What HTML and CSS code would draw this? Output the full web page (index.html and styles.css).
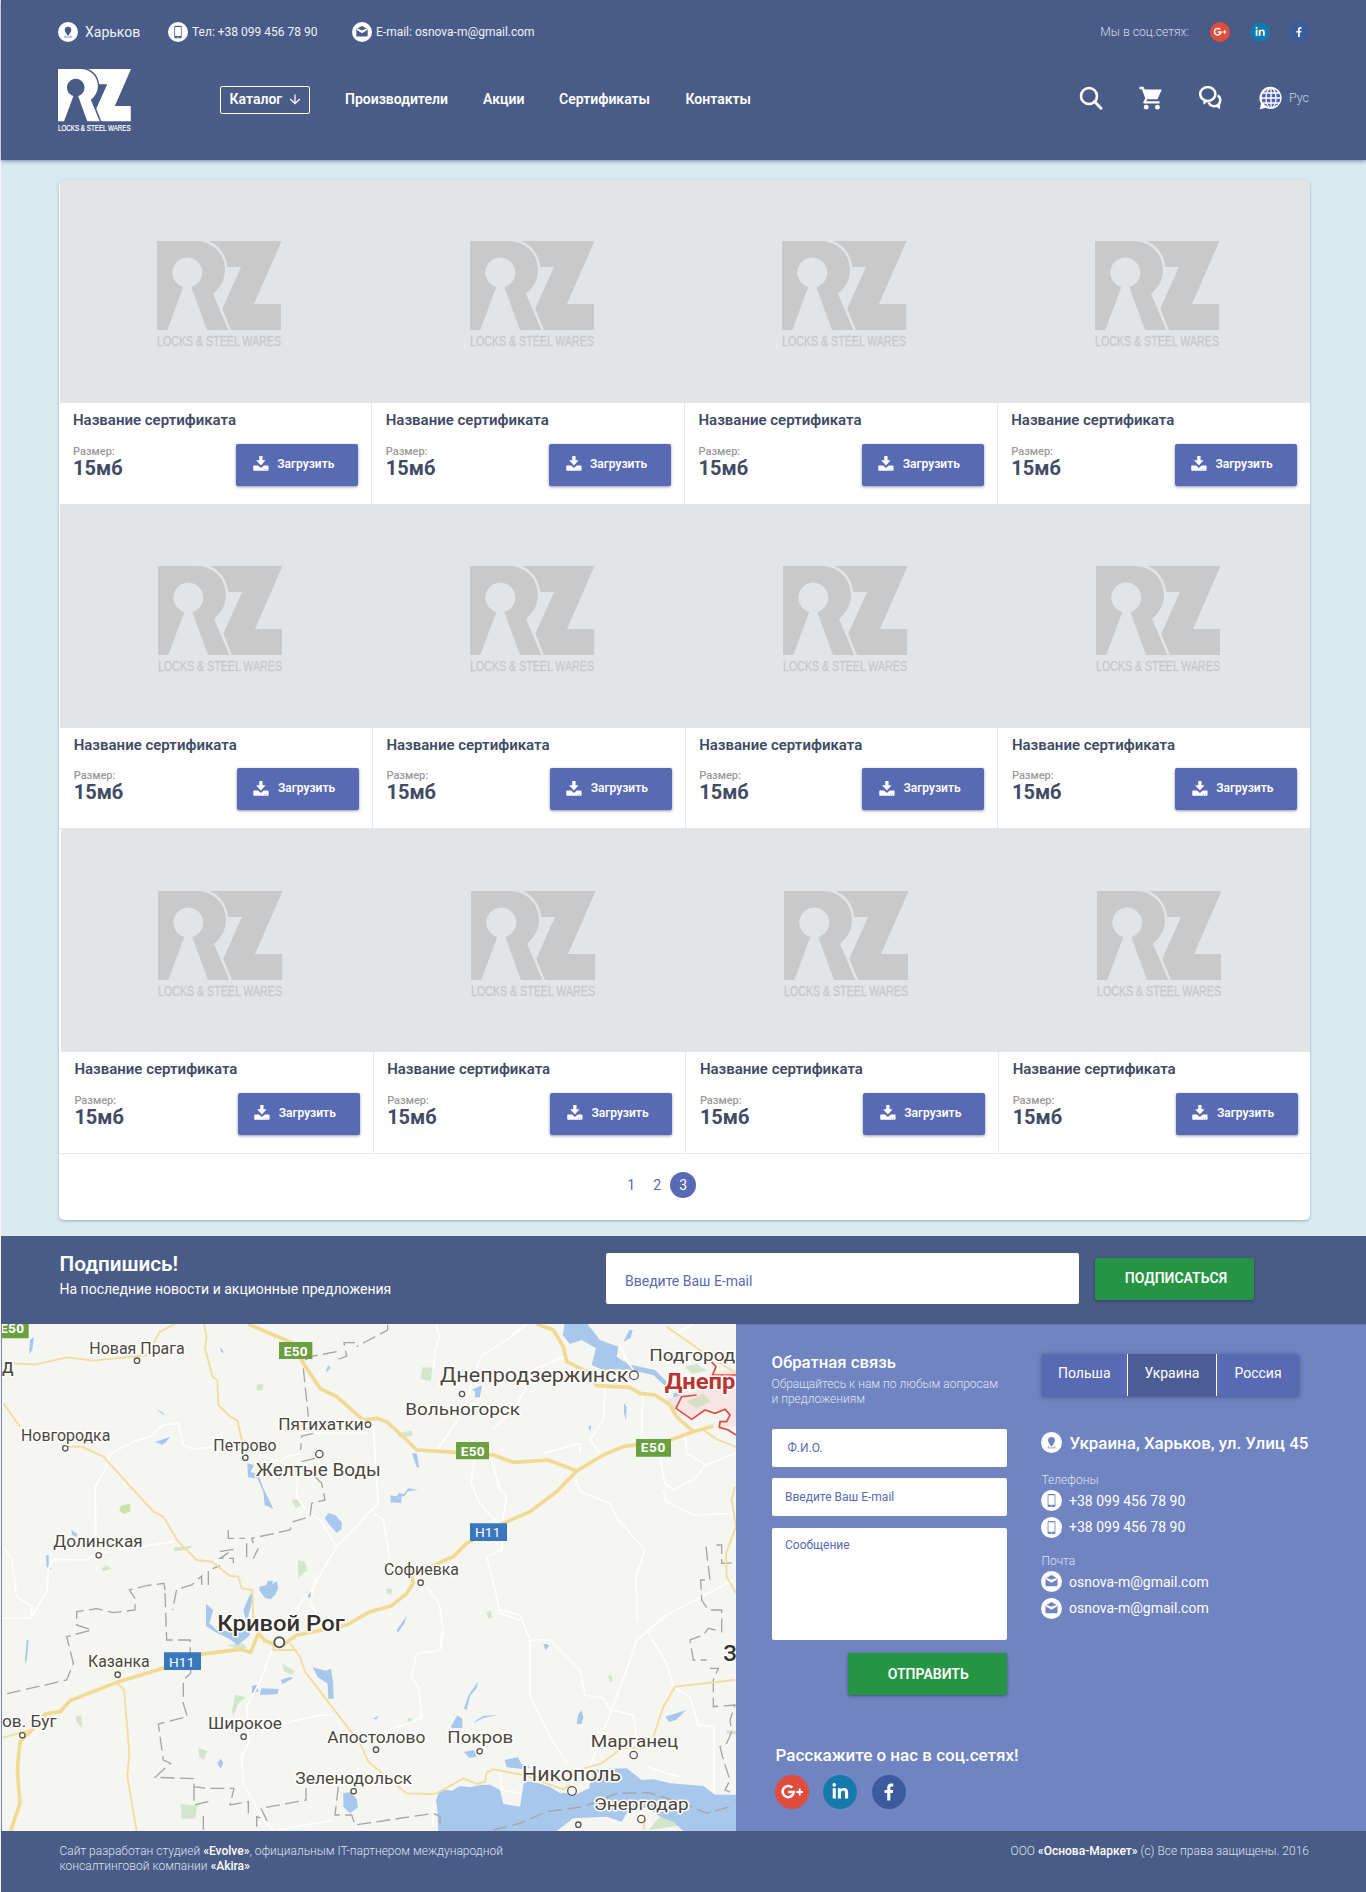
FILE: index.html
```html
<!DOCTYPE html>
<html lang="ru">
<head>
<meta charset="utf-8">
<title>RZ — Сертификаты</title>
<link rel="stylesheet" href="styles.css">
</head>
<body>
<svg class="sprite" aria-hidden="true">
  <symbol id="logo" viewBox="0 0 124.6 106.5">
    <path d="M0 0H38C56 0 68 13 68 29C68 39 63 47 56 52.7L71.3 89H50L34.3 46A15 15 0 1 0 26.3 46L10.3 89H0Z"/>
    <path d="M51.3 0H124.6L97 63H124.2V89H74L65.3 67.7L84 26H70.3C69 14 62 4 51.3 0Z"/>
    <text x="0" y="105" font-size="14.6" textLength="124" lengthAdjust="spacingAndGlyphs">LOCKS &amp; STEEL WARES</text>
  </symbol>
  <symbol id="pin" viewBox="0 0 20 20">
    <circle cx="10" cy="10" r="10" fill="#fff"/>
    <path d="M10 4.7a3.3 3.3 0 0 0-3.3 3.4c0 2.2 2 3.4 2.6 5.4h1.4c.6-2 2.6-3.2 2.6-5.4A3.3 3.3 0 0 0 10 4.700z" fill="currentColor"/>
    <path d="M7.600 13.300L6.500 15.200H13.500L12.400 13.300" fill="none" stroke="currentColor" stroke-width=".6"/>
  </symbol>
  <symbol id="phone" viewBox="0 0 20 20">
    <circle cx="10" cy="10" r="10" fill="#fff"/>
    <path fill-rule="evenodd" d="M7.300 3.700h5.400a1 1 0 0 1 1 1v10.600a1 1 0 0 1-1 1H7.300a1 1 0 0 1-1-1V4.700a1 1 0 0 1 1-1zM7.100 4.900v9.200h5.800V4.900zM9.300 14.700v.8h1.400v-.8z" fill="currentColor"/>
  </symbol>
  <symbol id="mail" viewBox="0 0 20 20">
    <circle cx="10" cy="10" r="10" fill="#fff"/>
    <path d="M10 3.900L15.700 7.200V13.500a1 1 0 0 1-1 1H5.300a1 1 0 0 1-1-1V7.200Z" fill="currentColor"/>
    <path d="M4.800 6.900H15.200V8L10 11.200L4.800 8Z" fill="#fff"/>
    <path d="M10 4.200L14 6.600L10 8.400L6 6.600Z" fill="currentColor"/>
  </symbol>
  <symbol id="gplus" viewBox="0 0 34 34">
    <circle cx="17" cy="17" r="17" fill="#df4d3c"/>
    <path d="M17.300 12.700A5.600 5.600 0 1 0 18.800 17H13.200" fill="none" stroke="#fff" stroke-width="2.500"/>
    <path d="M24.700 13.600v6.800M21.300 17h6.800" stroke="#fff" stroke-width="1.900"/>
  </symbol>
  <symbol id="linkedin" viewBox="0 0 34 34">
    <circle cx="17" cy="17" r="17" fill="#157aab"/>
    <circle cx="11.200" cy="9.900" r="1.800" fill="#fff"/>
    <path d="M9.700 13.200h3.100V23.500H9.700zM14.900 13.200h2.900v1.400c.7-1.100 1.700-1.700 3.200-1.700 3.100 0 4.100 1.700 4.100 4.700v5.900H22v-5.400c0-1.500-.3-2.700-1.900-2.700-1.500 0-2.100 1-2.100 2.600v5.500h-3.100z" fill="#fff"/>
  </symbol>
  <symbol id="facebook" viewBox="0 0 34 34">
    <circle cx="17" cy="17" r="17" fill="#3b5b9c"/>
    <path d="M15.200 25.500V18h-2.700v-2.900h2.700v-2.300c0-2.700 1.600-4.200 4-4.200.9 0 1.600.1 2.100.2v2.700h-1.500c-1.200 0-1.500.7-1.500 1.600v2h2.900L20.800 18h-2.500v7.500z" fill="#fff"/>
  </symbol>
  <symbol id="download" viewBox="0 0 16 16">
    <path d="M6.200 0h3.400v4.500h3.100L7.900 9.800L3 4.500h3.200z"/>
    <path fill-rule="evenodd" d="M.8 9.900h4.100l3 2.500l3-2.500h4.100a.8.8 0 0 1 .8.800v3.800a.8.8 0 0 1-.8.8H.8a.8.8 0 0 1-.8-.8v-3.800a.8.800 0 0 1 .8-.8zM11 13.300v.7h1v-.7zM13.100 13.300v.7h1v-.7z"/>
  </symbol>
</svg>

<header class="header">
  <div class="topbar">
    <div class="contact contact-city"><svg class="badge"><use href="#pin"/></svg><span>Харьков</span></div>
    <div class="contact contact-phone"><svg class="badge"><use href="#phone"/></svg><span>Тел: +38 099 456 78 90</span></div>
    <div class="contact contact-mail"><svg class="badge"><use href="#mail"/></svg><span>E-mail: osnova-m@gmail.com</span></div>
    <div class="topbar-social">
      <span class="social-note">Мы в соц.сетях:</span>
      <svg class="badge"><use href="#gplus"/></svg>
      <svg class="badge"><use href="#linkedin"/></svg>
      <svg class="badge"><use href="#facebook"/></svg>
    </div>
  </div>
  <div class="mainbar">
    <svg class="header-logo"><use href="#logo"/></svg>
    <nav class="nav">
      <a class="catalog">Каталог <svg viewBox="0 0 12 12" width="12" height="12"><path d="M6 1.500v9M1.200 6L6 10.700L10.800 6" fill="none" stroke="#fff" stroke-width="1.200"/></svg></a>
      <a class="nav-makers">Производители</a>
      <a class="nav-promo">Акции</a>
      <a class="nav-certs">Сертификаты</a>
      <a>Контакты</a>
    </nav>
    <div class="tools">
      <svg class="tool" viewBox="0 0 24 24"><circle cx="10" cy="10" r="8" fill="none" stroke="#fff" stroke-width="2.600"/><path d="M15.500 15.500L22 22.200" stroke="#fff" stroke-width="3" stroke-linecap="round"/></svg>
      <svg class="tool" viewBox="0 0 24 24"><path d="M.5.800h4l1.200 2.600h17.100L18.500 13.300H8.200L7.300 15.200H20.500V17.500H5.200a1 1 0 0 1-.9-1.500l2-3.500L2.900 3.200H.5z" fill="#fff"/><circle cx="7.200" cy="21.200" r="2.400" fill="#fff"/><circle cx="18.400" cy="21.200" r="2.400" fill="#fff"/></svg>
      <svg class="tool" viewBox="0 0 24 24"><ellipse cx="8.800" cy="8" rx="7.600" ry="6.900" fill="none" stroke="#fff" stroke-width="2.500"/><path d="M4 12.500L4.600 18.800L9 15.500Z" fill="#fff"/><path d="M18.700 9.200A6.100 6.100 0 1 1 9.600 16.600" fill="none" stroke="#fff" stroke-width="2.500"/><path d="M16.500 20L20.800 23.300L21.300 17.800Z" fill="#fff"/></svg>
      <svg class="tool tool-globe" viewBox="0 0 24 24"><path d="M12 .8A11.100 11.100 0 1 1 6.500 21.800L.8 23.500L2 17.500A11.100 11.100 0 0 1 12 .8z" fill="#fff"/><circle cx="12" cy="12" r="9.300" fill="#5062b4"/><path d="M2 12H22M4 7H20M4 17H20M12 2V22" stroke="#fff" stroke-width="1.300"/><ellipse cx="12" cy="12" rx="5" ry="9.800" fill="none" stroke="#fff" stroke-width="1.300"/></svg>
      <span class="lang">Рус</span>
    </div>
  </div>
</header>

<main class="panel">
  <div class="row">
    <article class="card"><div class="thumb"><svg><use href="#logo"/></svg></div><div class="info"><h3>Название сертификата</h3><div class="line"><p><small>Размер:</small><b>15мб</b></p><button class="load"><svg><use href="#download"/></svg>Загрузить</button></div></div></article>
    <article class="card"><div class="thumb"><svg><use href="#logo"/></svg></div><div class="info"><h3>Название сертификата</h3><div class="line"><p><small>Размер:</small><b>15мб</b></p><button class="load"><svg><use href="#download"/></svg>Загрузить</button></div></div></article>
    <article class="card"><div class="thumb"><svg><use href="#logo"/></svg></div><div class="info"><h3>Название сертификата</h3><div class="line"><p><small>Размер:</small><b>15мб</b></p><button class="load"><svg><use href="#download"/></svg>Загрузить</button></div></div></article>
    <article class="card"><div class="thumb"><svg><use href="#logo"/></svg></div><div class="info"><h3>Название сертификата</h3><div class="line"><p><small>Размер:</small><b>15мб</b></p><button class="load"><svg><use href="#download"/></svg>Загрузить</button></div></div></article>
  </div>
  <div class="row row-second">
    <article class="card"><div class="thumb"><svg><use href="#logo"/></svg></div><div class="info"><h3>Название сертификата</h3><div class="line"><p><small>Размер:</small><b>15мб</b></p><button class="load"><svg><use href="#download"/></svg>Загрузить</button></div></div></article>
    <article class="card"><div class="thumb"><svg><use href="#logo"/></svg></div><div class="info"><h3>Название сертификата</h3><div class="line"><p><small>Размер:</small><b>15мб</b></p><button class="load"><svg><use href="#download"/></svg>Загрузить</button></div></div></article>
    <article class="card"><div class="thumb"><svg><use href="#logo"/></svg></div><div class="info"><h3>Название сертификата</h3><div class="line"><p><small>Размер:</small><b>15мб</b></p><button class="load"><svg><use href="#download"/></svg>Загрузить</button></div></div></article>
    <article class="card"><div class="thumb"><svg><use href="#logo"/></svg></div><div class="info"><h3>Название сертификата</h3><div class="line"><p><small>Размер:</small><b>15мб</b></p><button class="load"><svg><use href="#download"/></svg>Загрузить</button></div></div></article>
  </div>
  <div class="row row-third">
    <article class="card"><div class="thumb"><svg><use href="#logo"/></svg></div><div class="info"><h3>Название сертификата</h3><div class="line"><p><small>Размер:</small><b>15мб</b></p><button class="load"><svg><use href="#download"/></svg>Загрузить</button></div></div></article>
    <article class="card"><div class="thumb"><svg><use href="#logo"/></svg></div><div class="info"><h3>Название сертификата</h3><div class="line"><p><small>Размер:</small><b>15мб</b></p><button class="load"><svg><use href="#download"/></svg>Загрузить</button></div></div></article>
    <article class="card"><div class="thumb"><svg><use href="#logo"/></svg></div><div class="info"><h3>Название сертификата</h3><div class="line"><p><small>Размер:</small><b>15мб</b></p><button class="load"><svg><use href="#download"/></svg>Загрузить</button></div></div></article>
    <article class="card"><div class="thumb"><svg><use href="#logo"/></svg></div><div class="info"><h3>Название сертификата</h3><div class="line"><p><small>Размер:</small><b>15мб</b></p><button class="load"><svg><use href="#download"/></svg>Загрузить</button></div></div></article>
  </div>
  <div class="pages"><a>1</a><a>2</a><a class="current">3</a></div>
</main>

<section class="subscribe">
  <div class="subscribe-text"><h2>Подпишись!</h2><p>На последние новости и акционные предложения</p></div>
  <div class="subscribe-field">Введите Ваш E-mail</div>
  <button class="green">ПОДПИСАТЬСЯ</button>
</section>

<section class="bottom">
  <!-- Map units are thirds of a pixel -->
  <svg class="map" viewBox="6 12 2202 1521" preserveAspectRatio="none">
    <rect x="6" y="12" width="2202" height="1521" fill="#f5f5f1"/>
    <g class="green-area">
      <path d="M362 557L390 551L392 574L372 581L358 572Z" fill="#cbe2a4"/>
      <path d="M770 194l20-3-3 19-15 2zM875 540l25-2 4 18-16 8zM894 720l20 5 8 25-28 24zM522 682l58-5-20 13-38 4zM305 745l15-9 14 10-26 8zM1160 808l16 2-2 13-14-3z"/>
      <path d="M1267 142l30 1-5 40-30-6zM1192 342l42-11 4 16-40 5zM2055 140l35-8 30 20-45 10zM1160 805l15 3-2 15-13-5z"/>
      <path d="M542 1453l50 4-6 38-40 3zM596 1285l26 8-10 26-14-8zM706 1124l30 8-20 18-16 38-4-18zM226 1190l18-5 2 40-16-20zM680 975l50-6 10 14-30 4zM848 1032l36 22-8 10-24-10z"/>
      <path d="M1975 1495l45-20 60 28-25 12-110 16zM2180 1230l28 3v10l-28-1zM1824 1067l10-3 4 20-8 3zM1460 877l12-5 4 20-10 4zM1224 1193l14 3-2 13-14-2zM2060 1465l10-2z"/>
    </g>
    <g fill="#a7c8ec">
      <path d="M90 60l12-10-5 40-10 12zM661 80l12 18-10-2zM979 150l6-15 6 10-12 12zM466 366l44-16-12 16-12 8zM470 267l20 12 2 8zM214 630l18 12-2 10-14-8zM974 594l12-15 20 7 20 22-2 20-14 10-22-24zM778 800l20-4 6-14 14 0 0 10 12-8 5 20-10 22-14 12-16-4-16-22zM1172 527l6 8 8-8 8 10 10-16 0 28-32-2zM742 430l20 5-10 20 24 10 14 40 20 40 10 22-26-12-4-40-18-40-28-3zM138 705h8l0 35 14 10-20-8zM920 818l10-8 4 22-8 2z"/>
      <path d="M1694 12H1762L1800 60L1855 80L1850 110L1885 133L1965 150L2000 185L1998 200L1960 165L1890 150L1832 147L1810 150L1775 135L1788 85L1745 60L1710 72L1688 45ZM2020 220l20-5 12 14-12 12-20-2zM1415 210l30-14 0 8-6 28-14 0 0-18zM1236 400h14l8 44-8-4zM1172 525l16 6 10-12 14 4 12-18 30 4-30 5-10 14-16 2-24 20zM1872 250l8 10-2 40-6-20zM1765 320l8-6-2 22zM1888 30l10 0-6 24-22 12z"/>
      <path d="M618 852L640 870 628 910 650 930 700 935 742 915 730 870 748 828 760 812 755 850 742 900 750 945 730 962 712 975 690 958 650 938 618 918ZM756 1098l14-4 6 20-20 6zM784 1105l52 2-4 16-52 2zM842 1080l30-10 6 5-30 18zM938 1042l40 10 15-6 6 40 2 50-16 0-2-45-30-20zM652 1330l10-14 8 12-8 18zM1030 1420l20-4 20 20 4 26-24 18-20-20zM1022 1105l22 25zM80 960l6 0-6 60-6 12zM1120 1195l16-8-8 12z"/>
      <path d="M1352 1220l20-34 15 10 0 28-30 0zM1392 1296l30-6 8 20-22 4zM1514 1320l40-8 10 20 30 10-30 5-44-6zM1734 1186l10-16 6 22-6 20-14 0zM1996 1190l62-20-30 30-20 6zM1190 930l30-42-6 20-20 30zM1630 972l10 0 8 6-12 12zM1430 1200l20-12 46-4-46 10-30 16zM1392 1165l14-40 28-40-4 20-20 22-10 44z"/>
      <path d="M1310 1440L1340 1410 1356 1412 1380 1398 1410 1402 1440 1395 1470 1394 1500 1410 1510 1452 1560 1460 1572 1385 1600 1385 1650 1400 1680 1420 1760 1395 1790 1348 1880 1345 1925 1380 1962 1378 2010 1390 2110 1398 2145 1424 2208 1424V1533H2050L2020 1505 1980 1490 1945 1460 1880 1480 1865 1505 1820 1490 1720 1495 1670 1533H1315Z"/>
      <path d="M1320 1410L1340 1410 1345 1447 1325 1440 1312 1460 1308 1440Z"/>
      <path d="M1670 1370L1770 1380 1768 1405 1725 1425 1690 1418 1650 1400Z" fill="#f5f5f1"/>
    </g>
    <path d="M1995 240L2045 225 2090 215 2130 160 2208 150V320L2180 320 2160 325 2160 300 2190 285 2178 270 2120 270 2080 298 2030 270Z" fill="#f6e5e2"/>
    <path d="M2060 245l50-25 20 25-40 20z" fill="#d6dfc6"/>
    <g class="minor">
      <path d="M330 402L320 440 286 500 288 660 290 700 260 720 160 718 145 745 142 810 96 890M330 402L400 365 450 350 490 315 535 310 550 375 580 388 640 380M780 405L840 425 860 410 900 400M290 700L520 665M1120 320L1125 400 1135 550 1010 680 940 800 885 870M910 340H1100M895 430L890 530 920 575 960 600 1010 680M1120 580L1150 600 1170 720M10 680L35 715 50 830 95 860V893M950 760L930 850 950 880"/>
      <path d="M1310 15L1318 50 1305 90 1300 150M1580 12L1520 60 1440 110M1310 390L1380 290 1400 240 1440 115M1480 325L1540 270 1580 200 1600 150 1690 110M1423 420L1413 490 1440 550 1460 575 1505 620M1475 420L1500 510 1520 530 1510 590 1505 690 1460 710 1490 830 1500 880 1560 900M1630 400L1740 370 1740 400M1728 480L1740 515 1830 550 1855 600 1935 690 1908 770 1912 905M1815 205L1810 300 1770 360 1800 400M1928 230L1925 350M1980 410L1995 490 2020 510 2085 475 2118 435M1990 510L2000 545 2080 585 2205 580M2055 350L2060 400 2118 435 2205 400M2010 50L2080 12M2200 780L2000 885 1910 960 1880 1050 1770 1340M1860 80L1880 120 1900 150M1280 800L1318 850 1330 940 1320 990M10 895H95"/>
      <path d="M815 990L780 1085 740 1160 745 1270 725 1310 730 1390 790 1500 820 1530M850 1210L960 1185 1000 1185M1000 1500L830 1530M1325 935L1320 990 1250 1000 1235 1070 1255 1100 1265 1195 1110 1250M1500 870L1560 885 1590 960 1590 1130 1650 1250 1700 1330M1590 960L1650 960 1740 1050 1755 1125 1810 1135 1830 1168 1900 1185 1910 1260M1940 930L2000 1030 2020 1100 2070 1130 2095 1215 2142 1220V1420M1940 1340L2000 1360 2040 1370M1500 1350L1505 1410 1565 1420M1300 1450V1520"/>
    </g>
    <g class="dashed">
      <path d="M1163 14V30L1070 80M1065 68H1032L1040 108 1010 120M1010 95L940 108 915 120M910 145L925 290M940 340L905 348 902 390M945 415L905 425M945 470L965 490 975 540 935 550 930 590 880 605 870 630 755 655 760 670M685 630V655L735 655M740 670V715M660 695L700 688 660 715H700V730M775 685L760 715M625 795V750L660 738M605 795V768L575 795 530 808 518 870M495 810L492 790 440 797 388 810 405 835V870L340 878 290 866 230 875V915L275 930 200 950 220 1030 200 1080 8 1124M495 820L500 960H570L572 1060 550 1080V1150L562 1190 475 1212 490 1320 512 1330 465 1372 582 1376V1400L620 1405 702 1405 690 1455 745 1445V1480M582 1400V1455L625 1445M610 1530V1480M770 1520V1490L800 1500 783 1465 918 1440V1395M1015 1400L1005 1485 1055 1485 1065 1515 1300 1480 1320 1490V1530"/>
      <path d="M1480 1530L1560 1510 1640 1475 1750 1460 1850 1420 1945 1418 2050 1450 2120 1480 2190 1460M2150 675H2165V730L2205 728M2118 680L2130 780H2102L2105 840 2125 870H2165V935L2125 925 2110 945 2070 960 2080 1020H2120M2130 1045H2155L2140 1080V1160L2205 1155 2190 1200 2195 1235 2180 1270 2160 1280 2170 1320 2190 1380 2175 1410 2200 1420"/>
    </g>
    <g class="major">
      <path class="trunk" d="M745 12L880 70 910 130 960 205 1010 230 1050 265 1090 300 1130 295 1160 305 1220 360 1250 390 1370 397 1480 405 1540 427 1645 420 1730 453 1810 405 1870 380 2010 360 2080 335 2140 318"/>
      <path class="trunk" d="M1730 453L1670 515 1590 575 1510 610 1400 670 1360 710 1235 765 1240 790 1220 820 1175 857 1110 875 1040 915 890 945 860 968 838 978 815 970 795 962 775 940 752 997 720 988 600 1003 490 1045 350 1087 210 1142 180 1175 135 1182 100 1225 60 1265 52 1350 60 1450 32 1533"/>
      <path class="trunk" d="M1610 12L1660 30 1690 80 1700 125 1760 155 1790 197 1890 202 1920 220 1965 225 2010 255 2030 290 2080 335"/>
      <path d="M10 250L60 320M190 380L245 380 310 410 460 575 490 590 535 665 590 720 635 725 690 768 715 770 725 805 757 810 760 900 775 940M40 130L105 134 200 112 280 122 440 105M460 70L480 35 525 12M612 12L620 50 615 85 638 170 652 180 655 255 690 290 712 302 735 400M350 1087L372 1110 380 1200 388 1300 382 1370 410 1533M870 970L900 1010 915 1055 1080 1270 1105 1325 1220 1420 1290 1422 1310 1420 1390 1375 1430 1392 1455 1385 1460 1358 1480 1348 1570 1365 1690 1408 1710 1395M1750 1345L1805 1330 1865 1285 1950 1280 1990 1160 2025 1100 2205 1080M2000 20L2100 90 2208 160M2110 330L2150 358 2208 380M2205 500L2195 540 2208 620 2178 700 2180 770 2208 820M8 1253L100 1228M1930 1530L1935 1500M820 970L820 990 890 990"/>
    </g>
    <path d="M2130 120L2148 140 2138 165 2208 165M2090 225L2045 230 2028 265 2075 298 2115 270 2145 280 2175 268 2190 285 2180 305 2160 305 2158 322 2185 330 2208 345" fill="none" stroke="#dd4b44" stroke-width="5"/>
    <g class="shields">
      <path d="M6 12H86V55H6zM837 66h100v51H837zM1368 366h99v52h-99zM1908 357h105v53h-105z" fill="#6aa040"/>
      <path d="M1410 610h111v53h-111zM492 997h111v53H492z" fill="#3a77bd"/>
      <text x="0" y="40" textLength="72">E50</text><text x="851" y="108" textLength="72">E50</text><text x="1382" y="409" textLength="72">E50</text><text x="1922" y="396" textLength="74">E50</text>
      <text class="thin" x="1425" y="651" textLength="76">H11</text><text class="thin" x="507" y="1041" textLength="76">H11</text>
    </g>
    <g class="places">
      <g class="dots"><circle cx="411" cy="122" r="8"/><circle cx="196" cy="385" r="8"/><circle cx="736" cy="413" r="8"/><circle cx="1104" cy="314" r="8"/><circle cx="958" cy="402" r="11"/><circle cx="296" cy="706" r="8"/><circle cx="1386" cy="222" r="8"/><circle cx="1902" cy="166" r="13"/><circle cx="1262" cy="788" r="8"/><circle cx="838" cy="967" r="15" stroke-width="6"/><circle cx="353" cy="1064" r="8"/><circle cx="67" cy="1246" r="8"/><circle cx="731" cy="1250" r="8"/><circle cx="1128" cy="1289" r="8"/><circle cx="1061" cy="1414" r="8"/><circle cx="1439" cy="1294" r="8"/><circle cx="1901" cy="1305" r="11"/><circle cx="1716" cy="1413" r="13"/><circle cx="1924" cy="1497" r="11"/><circle cx="1735" cy="1514" r="8"/></g>
      <g font-size="47">
        <text x="268" y="101" textLength="286" lengthAdjust="spacingAndGlyphs">Новая Прага</text>
        <text x="63" y="364" textLength="268" lengthAdjust="spacingAndGlyphs">Новгородка</text>
        <text x="640" y="394" textLength="190" lengthAdjust="spacingAndGlyphs">Петрово</text>
        <text x="835" y="331" textLength="256" lengthAdjust="spacingAndGlyphs">Пятихатки</text>
        <text x="160" y="680" textLength="268" lengthAdjust="spacingAndGlyphs">Долинская</text>
        <text x="1152" y="766" textLength="225" lengthAdjust="spacingAndGlyphs">Софиевка</text>
        <text x="264" y="1042" textLength="185" lengthAdjust="spacingAndGlyphs">Казанка</text>
        <text x="886" y="1393" textLength="350" lengthAdjust="spacingAndGlyphs">Зеленодольск</text>
      </g>
      <g font-size="51">
        <text x="1216" y="285" textLength="344" lengthAdjust="spacingAndGlyphs">Вольногорск</text>
        <text x="6" y="1222" textLength="164" lengthAdjust="spacingAndGlyphs">ов. Буг</text>
        <text x="624" y="1226" textLength="222" lengthAdjust="spacingAndGlyphs">Широкое</text>
        <text x="982" y="1268" textLength="294" lengthAdjust="spacingAndGlyphs">Апостолово</text>
        <text x="1342" y="1270" textLength="198" lengthAdjust="spacingAndGlyphs">Покров</text>
        <text x="1772" y="1281" textLength="263" lengthAdjust="spacingAndGlyphs">Марганец</text>
        <text x="1782" y="1470" textLength="284" lengthAdjust="spacingAndGlyphs">Энергодар</text>
        <text x="1948" y="122" textLength="258" lengthAdjust="spacingAndGlyphs">Подгород</text>
      </g>
      <g font-size="58">
        <text x="767" y="467" font-size="54" textLength="375" lengthAdjust="spacingAndGlyphs">Желтые Воды</text>
        <text x="1320" y="187" textLength="565" lengthAdjust="spacingAndGlyphs">Днепродзержинск</text>
        <text x="1566" y="1383" textLength="297" lengthAdjust="spacingAndGlyphs">Никополь</text>
        <text x="6" y="160">д</text>
      </g>
      <g class="city">
        <text x="652" y="934" font-size="68" textLength="382" lengthAdjust="spacingAndGlyphs">Кривой Рог</text>
        <text x="2170" y="1024" font-size="66">З</text>
        <text class="red" x="1994" y="207" font-size="66" textLength="212" lengthAdjust="spacingAndGlyphs">Днепр</text>
      </g>
    </g>
  </svg>

  <div class="contacts">
    <div class="feedback">
      <h2>Обратная связь</h2>
      <p class="lead">Обращайтесь к нам по любым аопросам<br>и предложениям</p>
      <div class="field field-name">Ф.И.О.</div>
      <div class="field">Введите Ваш E-mail</div>
      <div class="field field-message">Сообщение</div>
      <button class="green send">ОТПРАВИТЬ</button>
      <h2 class="share-title">Расскажите о нас в соц.сетях!</h2>
      <div class="share"><svg><use href="#gplus"/></svg><svg><use href="#linkedin"/></svg><svg><use href="#facebook"/></svg></div>
    </div>
    <div class="office">
      <div class="tabs"><a>Польша</a><a class="active">Украина</a><a>Россия</a></div>
      <div class="address"><svg><use href="#pin"/></svg>Украина, Харьков, ул. Улиц 45</div>
      <p class="label">Телефоны</p>
      <div class="entry"><svg><use href="#phone"/></svg>+38 099 456 78 90</div>
      <div class="entry"><svg><use href="#phone"/></svg>+38 099 456 78 90</div>
      <p class="label label-mail">Почта</p>
      <div class="entry"><svg><use href="#mail"/></svg>osnova-m@gmail.com</div>
      <div class="entry"><svg><use href="#mail"/></svg>osnova-m@gmail.com</div>
    </div>
  </div>
</section>

<footer class="footer">
  <p>Сайт разработан студией <b>«Evolve»</b>, официальным IT-партнером международной<br>консалтинговой компании <b>«Akira»</b></p>
  <p>ООО <b>«Основа-Маркет»</b> (с) Все права защищены. 2016</p>
</footer>
</body>
</html>
```
FILE: styles.css
```css
* { box-sizing: border-box; }
body {
  margin: 0;
  padding-left: 1px;
  width: 1366px;
  font-family: Roboto, "Liberation Sans", sans-serif;
  font-size: 14px;
  color: #fff;
  background: linear-gradient(90deg, #f4f8fa 1px, #d9eaf0 1px);
}
h2, h3, p { margin: 0; font-weight: 500; }
button { border: 0; padding: 0; font: inherit; color: #fff; }
svg { display: block; flex: none; }
.sprite { position: absolute; width: 0; height: 0; }
#logo { overflow: visible; }
#logo text { font-family: "Liberation Sans Narrow", "Liberation Sans", sans-serif; stroke: currentColor; stroke-width: .35; }

/* Header */
.header {
  height: 160px;
  padding: 21px 57px 0;
  background: #495c87;
  box-shadow: 0 1px 4px rgba(50, 70, 100, .6);
}
.topbar { display: flex; align-items: center; height: 21px; color: #eef2fa; }
.contact { display: flex; align-items: center; font-size: 12px; white-space: nowrap; }
.badge { width: 20px; height: 20px; color: #495c87; }
.contact-city { width: 110px; gap: 7px; font-size: 14px; }
.contact-phone { width: 183.5px; gap: 4px; }
.contact-mail { gap: 4.500px; }
.topbar-social { display: flex; align-items: center; gap: 19.300px; margin-left: auto; }
.social-note { font-size: 12.2px; font-weight: 300; color: #d5dcec; margin-right: 2px; }
.mainbar { display: flex; align-items: flex-start; padding-top: 27px; }
.header-logo { width: 73px; height: 62.4px; fill: #fff; color: #fff; overflow: visible; }
.nav { display: flex; align-items: center; height: 28px; margin: 16.500px 0 0 88.500px; font-weight: 600; white-space: nowrap; line-height: 26px; }
.nav > a { padding-bottom: 1.500px; }
.nav > .catalog {
  display: flex; align-items: center; justify-content: space-between;
  width: 90px; height: 28px; padding: 0 8px 1px 9px; margin-right: 35.500px;
  border: 1px solid #fff; border-radius: 2px;
}
.nav-makers { width: 138px; }
.nav-promo { width: 76px; }
.nav-certs { width: 126.500px; }
.tools { display: flex; align-items: center; gap: 36px; margin: 16.500px 0 0 auto; }
.tool { width: 24px; height: 24px; }
.lang { margin-left: -30px; font-size: 12.500px; font-weight: 300; color: #cdd5e8; }

/* Certificates */
.panel {
  width: 1251px; height: 1039.500px; margin: 20px 0 16.500px 58px;
  background: #fff; border-radius: 5px; overflow: hidden;
  box-shadow: 0 1px 3px rgba(60, 90, 110, .4);
}
.row { display: grid; grid-template-columns: repeat(4, 312.750px); height: 324.500px; border-bottom: 1px solid #e6e7ea; padding-left: .5px; }
.row-second { padding-left: 1.200px; }
.row-third { padding-left: 1.900px; }
.thumb { height: 223px; padding: 60.700px 0 0 97.400px; background: #e1e5e8; }
.row-second .thumb, .row-third .thumb { padding-top: 61.500px; }
.thumb svg { width: 124.600px; height: 106.500px; fill: #c9c9c9; color: #c9c9c9; }
.info { height: 101px; padding: 8.300px 13px 0 13.500px; border-right: 1px solid #e6e7ea; color: #414b65; }
.info h3 { font-size: 15px; line-height: 18px; font-weight: 600; }
.line { display: flex; justify-content: space-between; margin-top: 14.700px; }
.line small { display: block; font-size: 11px; line-height: 16px; color: #9a9a9a; }
.line b { display: block; font-size: 20px; line-height: 22px; margin-top: -3px; font-weight: 700; }
.load {
  display: flex; align-items: center; width: 122px; height: 42px; padding: 0 0 2px 16.500px; gap: 8.500px;
  background: #586ab3; border-radius: 2px; font-size: 12px; font-weight: 600;
  box-shadow: 0 1px 3px rgba(40, 50, 90, .5);
}
.load svg { width: 16px; height: 15.500px; fill: #fff; }
.pages { display: flex; justify-content: center; padding: 18px 53.500px 0 0; margin-left: -1px; color: #586ab3; }
.pages a { width: 26px; height: 26px; line-height: 26px; text-align: center; border-radius: 50%; }
.pages .current { background: #586ab3; color: #fff; }

/* Subscription */
.subscribe { display: flex; height: 88px; padding-left: 58.500px; background: #495c87; }
.subscribe-text { width: 546px; padding-top: 16px; }
.subscribe h2 { font-size: 20.700px; line-height: 24px; font-weight: 600; }
.subscribe p { font-size: 14px; line-height: 18px; margin-top: 4px; font-weight: 400; }
.subscribe-field {
  width: 473.500px; height: 50.500px; margin: 17px 16px 0 0; padding: 3px 0 0 19.500px; line-height: 50px;
  background: #fff; border-radius: 2px; color: #586ab3;
}
.green {
  width: 159px; height: 42px; background: #259444; border-radius: 2px; font-size: 14px; font-weight: 600;
  box-shadow: 0 1px 3px rgba(30, 40, 80, .6);
}
.subscribe .green { margin-top: 21.500px; padding: 0 0 2px 3px; }

/* Map and contacts */
.bottom { display: flex; height: 507px; padding-left: 1px; background: #6f84c0; }
.map { width: 734px; height: 507px; }
.map .green-area { fill: #d3e5cb; }
.map .minor { fill: none; stroke: #fff; stroke-width: 5; stroke-linejoin: round; }
.map .major { fill: none; stroke: #f3dc9c; stroke-width: 5.500; stroke-linejoin: round; }
.map .trunk { stroke: #f2da92; stroke-width: 11; }
.map .dashed { fill: none; stroke: #a5a5a5; stroke-width: 4; stroke-dasharray: 42 16; }
.map .shields text { fill: #fff; font-size: 41px; font-weight: 700; }
.map .shields .thin { font-weight: 400; }
.map .places text { fill: #4b463c; stroke: #fff; stroke-width: 9; paint-order: stroke; stroke-linejoin: round; }
.map .places .city text { fill: #35322d; font-weight: 500; }
.map .places .city .red { fill: #bb3431; font-weight: 700; }
.map .dots { fill: #fff; stroke: #5b564d; stroke-width: 4; }
.contacts { display: flex; flex: 1; box-shadow: inset 0 1px #5f74ab; }
.feedback { width: 270px; padding: 29px 0 0 35.500px; }
.contacts h2 { font-size: 16.700px; line-height: 20px; white-space: nowrap; }
.lead { font-size: 12px; line-height: 15.200px; margin: 4px 0 21.600px; font-weight: 300; color: #dfe5f5; white-space: nowrap; }
.field {
  width: 235.500px; height: 37.500px; margin-bottom: 11.800px; padding-left: 13.500px; line-height: 38px;
  font-size: 12px; color: #586ab3; background: #fff; border-radius: 2px;
}
.field-name { padding-left: 16px; }
.field-message { height: 112px; line-height: 35px; margin-bottom: 13.500px; }
.send { display: block; width: 159.500px; margin-left: 76px; padding-left: 2px; }
.contacts .share-title { margin: 49.500px 0 0 4px; font-size: 17px; font-weight: 500; }
.share { display: flex; gap: 14.300px; margin: 10px 0 0 3.500px; }
.share svg { width: 34px; height: 34px; }
.office { padding: 30px 0 0 35.500px; color: #fff; }
.tabs {
  display: flex; width: 257.500px; height: 42px; line-height: 39px; text-align: center;
  background: #586ab3; border-radius: 3px; box-shadow: 0 1px 4px rgba(40, 50, 90, .6);
}
.tabs a { flex: 0 0 85.500px; }
.tabs .active { flex: 0 0 90px; background: #4c5d95; border: solid #fff; border-width: 0 1px; }
.tabs a:last-child { flex: 0 0 82px; }
.address { display: flex; align-items: center; gap: 7.500px; height: 24px; margin-top: 34.500px; font-size: 16.950px; font-weight: 500; white-space: nowrap; }
.office svg { width: 21px; height: 21px; color: #6f84c0; margin-left: -.5px; }
.label { font-size: 12px; line-height: 16px; margin-top: 17px; font-weight: 300; color: #dfe5f5; }
.label-mail { margin-top: 12.500px; margin-bottom: -.5px; }
.entry { display: flex; align-items: center; gap: 7px; height: 26.500px; }

/* Footer */
.footer {
  display: flex; justify-content: space-between; height: 61px; padding: 12.500px 57px 0 58.500px;
  background: #495c87; font-size: 12px; line-height: 15.500px; color: #dbe1ef;
}
.footer p { font-weight: 300; }
.footer b { font-weight: 500; color: #fff; }
```
